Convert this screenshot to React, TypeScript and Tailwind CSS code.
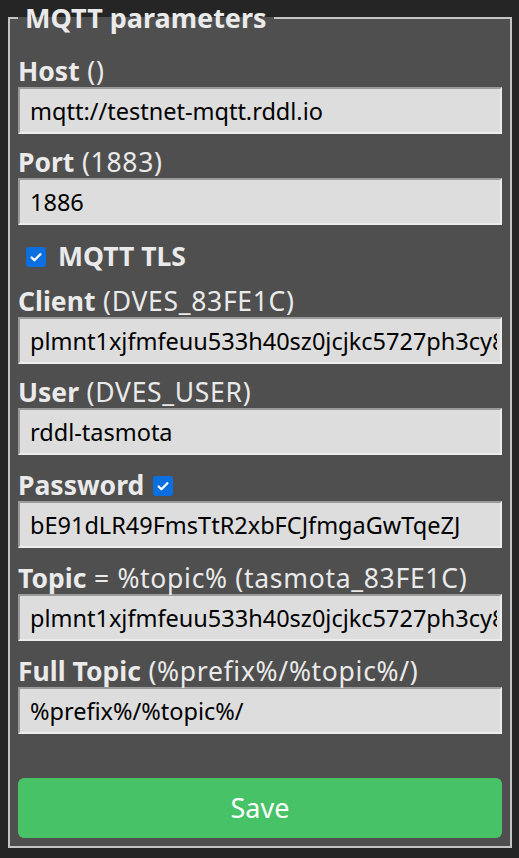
import React from 'react';

const font = { fontFamily: '"Noto Sans", "Open Sans", sans-serif' };

type FieldProps = {
  label: string;
  hint?: string;
  value: string;
  checked?: boolean;
  gap?: string;
};

const Check = () => (
  <span className="inline-flex h-[20px] w-[20px] shrink-0 items-center justify-center rounded-[3px] bg-[#0b6fe0] align-middle">
    <svg viewBox="0 0 16 16" className="h-[14px] w-[14px]" fill="none" stroke="white" strokeWidth="2.6" strokeLinecap="round" strokeLinejoin="round">
      <path d="M3 8.5l3.2 3.2L13 4.8" />
    </svg>
  </span>
);

const Field = ({ label, hint, value, checked, gap = 'mb-[15px]' }: FieldProps) => (
  <div className={gap}>
    <div className="flex h-[27px] items-center gap-[9px] whitespace-nowrap text-[26.5px] leading-[27px] text-[#eaeaea]">
      <span>
        <b>{label}</b>
        {hint && <span className="tracking-[0.7px]">{' ' + hint}</span>}
      </span>
      {checked && <Check />}
    </div>
    <input
      readOnly
      defaultValue={value}
      className="mt-[2px] block h-[47px] w-full min-w-0 border-2 border-t-[#9a9a9a] border-l-[#9a9a9a] border-b-[#ececec] border-r-[#ececec] bg-[#dddddd] pl-[10px] pr-[3px] text-[23.5px] text-black outline-none"
    />
  </div>
);

export default function App() {
  return (
    <div className="min-h-[858px] bg-[#252525] pt-[3px] pl-[8px] pr-[7px] pb-[8px]" style={font}>
      <fieldset className="min-w-0 border-2 border-[#c4c4c4] bg-[#4f4f4f] px-[8px] pb-[8px]">
        <legend className="whitespace-nowrap text-[27px] font-bold leading-[30px] text-[#eaeaea]">{'\u00a0MQTT parameters\u00a0'}</legend>

        <div className="pt-[25px]">
          <Field label="Host" hint="()" value="mqtt://testnet-mqtt.rddl.io" />
          <Field label="Port" hint="(1883)" value="1886" />

          <div className="mt-[18px] mb-[18px] flex h-[27px] items-center gap-[12px] pl-[8px] text-[26.5px] font-bold text-[#eaeaea]">
            <Check />
            <span>MQTT TLS</span>
          </div>

          <Field label="Client" hint="(DVES_83FE1C)" value="plmnt1xjfmfeuu533h40sz0jcjkc5727ph3cy8sj7p" />
          <Field label="User" hint="(DVES_USER)" value="rddl-tasmota" gap="mb-[17px]" />
          <Field label="Password" value="bE91dLR49FmsTtR2xbFCJfmgaGwTqeZJ" checked gap="mb-[17px]" />
          <Field label="Topic" hint="= %topic% (tasmota_83FE1C)" value="plmnt1xjfmfeuu533h40sz0jcjkc5727ph3cy8sj7p" gap="mb-[17px]" />
          <Field label="Full Topic" hint="(%prefix%/%topic%/)" value="%prefix%/%topic%/" />

          <button className="mt-[44px] flex h-[60px] w-full items-center justify-center rounded-[6px] bg-[#47c266] text-[27px] text-white">
            Save
          </button>
        </div>
      </fieldset>
    </div>
  );
}
